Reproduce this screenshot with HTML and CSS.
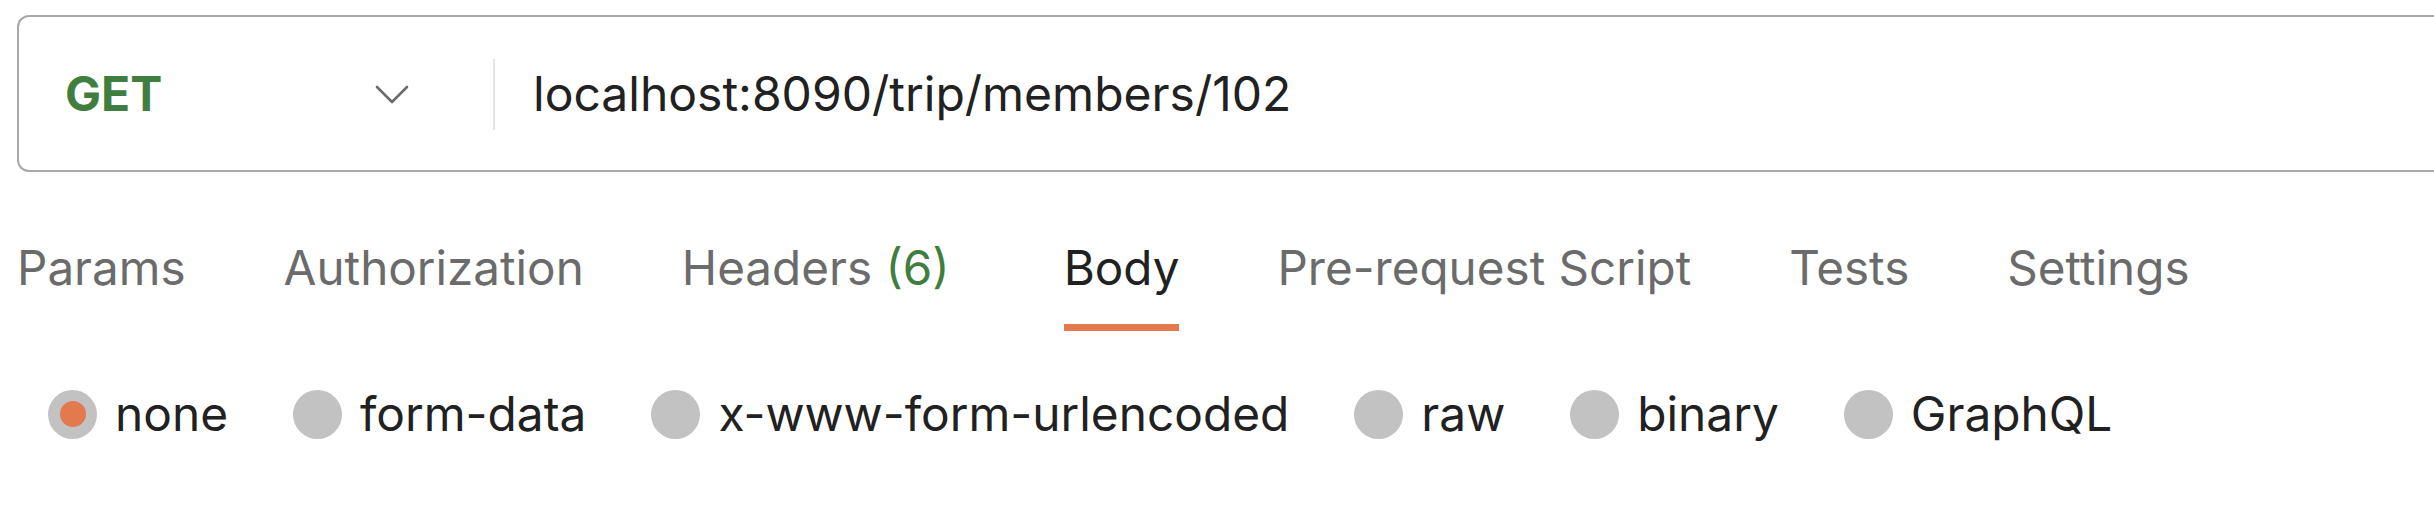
FILE: index.html
```html
<!DOCTYPE html>
<html>
<head>
<meta charset="utf-8">
<link rel="stylesheet" href="styles.css">
</head>
<body>
<div class="page">
  <div class="urlbar">
    <div class="method">
      <span class="method-name">GET</span>
      <svg class="chevron" viewBox="0 0 34 20" width="34" height="20"><path d="M2 2 L17 17 L32 2" fill="none" stroke="#6b6b6b" stroke-width="2.6" stroke-linecap="round" stroke-linejoin="round"/></svg>
    </div>
    <div class="sep"></div>
    <div class="url">localhost:8090/trip/members/102</div>
  </div>

  <div class="tabs">
    <div class="tab">Params</div>
    <div class="tab">Authorization</div>
    <div class="tab">Headers <span class="count">(6)</span></div>
    <div class="tab active">Body</div>
    <div class="tab">Pre-request Script</div>
    <div class="tab">Tests</div>
    <div class="tab">Settings</div>
  </div>

  <div class="radios">
    <div class="radio checked"><span class="dot"></span><span class="label">none</span></div>
    <div class="radio"><span class="dot"></span><span class="label">form-data</span></div>
    <div class="radio"><span class="dot"></span><span class="label">x-www-form-urlencoded</span></div>
    <div class="radio"><span class="dot"></span><span class="label">raw</span></div>
    <div class="radio"><span class="dot"></span><span class="label">binary</span></div>
    <div class="radio"><span class="dot"></span><span class="label">GraphQL</span></div>
  </div>
</div>
</body>
</html>
```

FILE: styles.css
```css
html, body {
  margin: 0;
  padding: 0;
  background: #ffffff;
}
body {
  font-family: Inter, "Liberation Sans", sans-serif;
  color: #212121;
  overflow: hidden;
}
.page {
  padding: 15px 0 0 17px;
}
.urlbar {
  display: flex;
  align-items: center;
  height: 153px;
  border: 2px solid #a9a9a9;
  border-right: none;
  border-radius: 12px 0 0 12px;
  margin-right: -40px;
}
.method {
  display: flex;
  align-items: center;
  padding-left: 46px;
  width: 428px;
  box-sizing: border-box;
}
.method-name {
  font-size: 48px;
  font-weight: 700;
  color: #3f7e3f;
  line-height: 56px;
  width: 310px;
}
.chevron {
  display: block;
  margin-top: 2px;
}
.sep {
  width: 2px;
  height: 71px;
  background: #e4e4e4;
  margin-left: 46px;
  margin-top: 2px;
}
.url {
  font-size: 48px;
  line-height: 56px;
  color: #212121;
  margin-left: 38px;
}
.tabs {
  display: flex;
  gap: 98px;
  margin-top: 68px;
}
.tab {
  font-size: 47.6px;
  line-height: 56px;
  color: #6b6b6b;
  padding-bottom: 28px;
  border-bottom: 7px solid transparent;
  white-space: nowrap;
}
.tab .count {
  color: #3f7e3f;
}
.tab.active {
  color: #212121;
  border-bottom-color: #e27a4e;
  margin-left: 16px;
}
.radios {
  display: flex;
  align-items: center;
  gap: 65px;
  margin-top: 55px;
  padding-left: 31px;
}
.radio {
  display: flex;
  align-items: center;
  gap: 18px;
}
.dot {
  width: 49px;
  height: 49px;
  border-radius: 50%;
  background: #c2c2c2;
  display: flex;
  align-items: center;
  justify-content: center;
}
.radio.checked .dot::after {
  content: "";
  width: 26px;
  height: 26px;
  border-radius: 50%;
  background: #e27a4e;
}
.label {
  font-size: 47.8px;
  line-height: 56px;
  color: #212121;
  white-space: nowrap;
}
```
